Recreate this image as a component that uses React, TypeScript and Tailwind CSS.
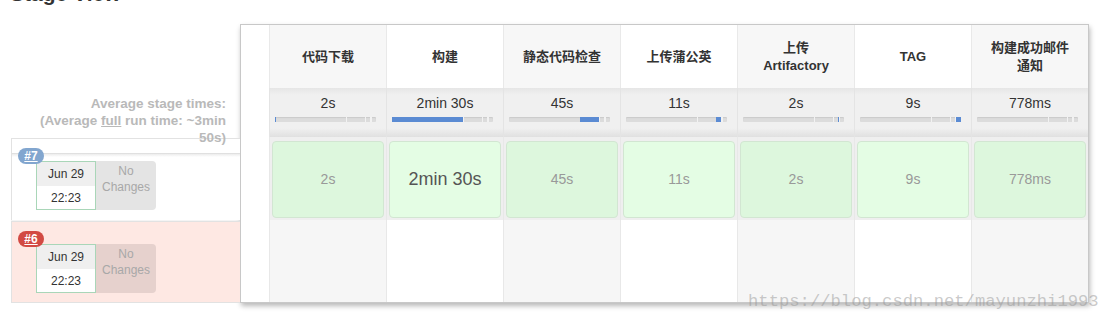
import React from "react";

const FONT = { fontFamily: '"Liberation Sans", Arial, "Noto Sans CJK SC", sans-serif' };

type Stage = {
  name: React.ReactNode;
  avg: string;
  fillStart: number;
  fillWidth: number;
  time: string;
  big?: boolean;
};

const stages: Stage[] = [
  { name: "代码下载", avg: "2s", fillStart: 0, fillWidth: 1, time: "2s" },
  { name: "构建", avg: "2min 30s", fillStart: 0, fillWidth: 70, time: "2min 30s", big: true },
  { name: "静态代码检查", avg: "45s", fillStart: 70, fillWidth: 19, time: "45s" },
  { name: "上传蒲公英", avg: "11s", fillStart: 89, fillWidth: 5, time: "11s" },
  {
    name: (
      <>
        上传
        <br />
        Artifactory
      </>
    ),
    avg: "2s",
    fillStart: 94,
    fillWidth: 1,
    time: "2s",
  },
  { name: "TAG", avg: "9s", fillStart: 95, fillWidth: 5, time: "9s" },
  {
    name: (
      <>
        构建成功邮件
        <br />
        通知
      </>
    ),
    avg: "778ms",
    fillStart: 100,
    fillWidth: 0,
    time: "778ms",
  },
];

const ticks = [70, 89, 94, 95];

function Bar({ start, width }: { start: number; width: number }) {
  return (
    <div className="relative ml-[5px] mr-[10px] h-[5px] rounded-[1px] bg-[#dcdcdc] shadow-[inset_0_1px_1px_rgba(0,0,0,0.08)]">
      {ticks.map((t) => (
        <div
          key={t}
          className="absolute top-0 h-[5px] w-[1px] bg-[#f2f2f2]"
          style={{ left: `${t}%` }}
        />
      ))}
      {width > 0 && (
        <div
          className="absolute top-0 h-[5px] bg-[#5b8bd3]"
          style={{ left: `${start}%`, width: `${Math.max(width, 1)}%`, minWidth: 1 }}
        />
      )}
    </div>
  );
}

function BuildRow({
  num,
  badge,
  rowBg,
  noChangeBg,
  topLine,
  last,
}: {
  num: string;
  badge: string;
  rowBg: string;
  noChangeBg: string;
  topLine?: boolean;
  last?: boolean;
}) {
  return (
    <div
      className={`relative h-[82px] border-l border-t border-[#e2e2e2] ${rowBg} ${
        last ? "border-b" : ""
      }`}
    >
      {topLine ? (
        <div className="mt-[14px] h-[4px] border-t border-[#e0e0e0] bg-gradient-to-b from-[#ececec] to-white" />
      ) : (
        <div className="h-[18px]" />
      )}
      <div
        className={`absolute left-[6px] top-[9px] flex h-[16px] w-[26px] items-center justify-center rounded-full text-[12px] font-bold leading-none text-white underline ${badge}`}
      >
        {num}
      </div>
      <div className="ml-[24px] mt-[4px] flex">
        <div className="flex h-[49px] w-[60px] flex-col border border-[#a9d6b8] text-[12px] text-[#333]">
          <div className="flex h-[24px] items-center justify-center bg-[#efefef]">Jun 29</div>
          <div className="flex flex-1 items-center justify-center bg-white">22:23</div>
        </div>
        <div
          className={`flex h-[49px] w-[60px] flex-col items-center rounded-r-[4px] pt-[2px] text-[12px] leading-[16px] text-[#a8a8a8] ${noChangeBg}`}
        >
          <span>No</span>
          <span>Changes</span>
        </div>
      </div>
    </div>
  );
}

export default function App() {
  return (
    <div className="relative h-[323px] w-[1120px] overflow-hidden bg-white" style={FONT}>
      <div className="-mt-[18px] ml-[10px] h-[24px] text-[21px] font-bold leading-[24px] text-[#333]">
        Stage View
      </div>
      <div className="flex">
        <div className="ml-[11px] w-[229px]">
          <div className="relative z-10 mb-[-8px] mt-[89px] pr-[14px] text-right text-[13.5px] font-bold leading-[17px] text-[#b9b9b9]">
            Average stage times:
            <br />
            (Average <span className="underline">full</span> run time: ~3min
            <br />
            50s)
          </div>
          <BuildRow
            num="#7"
            badge="bg-[#82a6cf]"
            rowBg="bg-white"
            noChangeBg="bg-[#e4e4e4]"
            topLine
          />
          <div className="h-[1px] bg-[#f4f4f4]" />
          <BuildRow
            num="#6"
            badge="bg-[#d24a43]"
            rowBg="bg-[#fee8e3]"
            noChangeBg="bg-[#e6d1cd]"
            last
          />
        </div>

        <div className="mt-[18px] border border-[#c8c8c8] bg-white shadow-[1px_3px_5px_rgba(0,0,0,0.28)]">
          <div className="grid grid-cols-[28px_repeat(7,117px)] grid-rows-[63px_49px_83px_82px]">
            <div className="bg-white" />
            {stages.map((s, i) => (
              <div
                key={`h${i}`}
                className={`flex items-center justify-center border-l border-[#e9e9e9] px-[6px] text-center text-[13px] font-bold leading-[18px] text-[#333] ${
                  i % 2 === 0 ? "bg-[#f7f7f7]" : "bg-white"
                }`}
              >
                <span>{s.name}</span>
              </div>
            ))}

            <div className="bg-white" />
            {stages.map((s, i) => (
              <div
                key={`a${i}`}
                className="border-l border-[#e4e4e4] bg-[linear-gradient(to_bottom,#e6e6e6,#f0f0f0_14%,#f0f0f0_82%,#e0e0e0)] pt-[6px]"
              >
                <div className="text-center text-[14px] leading-[18px] text-[#333]">{s.avg}</div>
                <div className="mt-[5px]">
                  <Bar start={s.fillStart} width={s.fillWidth} />
                </div>
              </div>
            ))}

            <div className="bg-white" />
            {stages.map((s, i) => (
              <div
                key={`b${i}`}
                className="border-l border-[#e8e8e8] bg-[#efefef] px-[2px] pb-[2px] pt-[4px]"
              >
                <div
                  className={`flex h-full items-center justify-center rounded-[4px] border border-[#d2e6d2] ${
                    i % 2 === 0 ? "bg-[#ddf7dd]" : "bg-[#e4fde4]"
                  } ${s.big ? "text-[18px] text-[#555]" : "text-[14px] text-[#999]"}`}
                >
                  {s.time}
                </div>
              </div>
            ))}

            <div className="bg-white" />
            {stages.map((_, i) => (
              <div
                key={`e${i}`}
                className={`border-l border-[#e8e8e8] ${i % 2 === 0 ? "bg-[#f6f6f6]" : "bg-white"}`}
              />
            ))}
          </div>
        </div>
      </div>

      <div
        className="pointer-events-none absolute left-[748px] top-[292px] text-[17.2px] leading-[20px] text-[rgba(150,150,150,0.5)]"
        style={{ fontFamily: '"Liberation Mono", "Courier New", monospace' }}
      >
        https://blog.csdn.net/mayunzhi1993
      </div>
    </div>
  );
}
